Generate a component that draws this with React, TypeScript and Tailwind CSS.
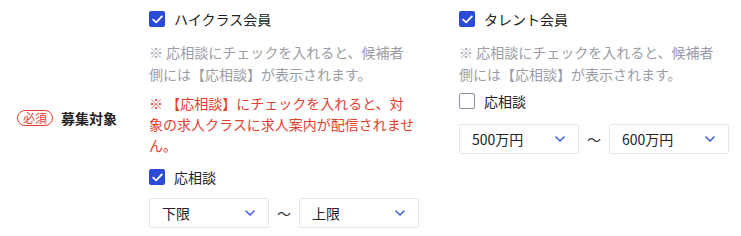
import { useState } from 'react'

const FONT = "font-['Noto_Sans_CJK_JP','Noto_Sans',sans-serif]"

function Check({ checked, label, onChange }: { checked: boolean; label: string; onChange: () => void }) {
  return (
    <button type="button" onClick={onChange} className="flex items-center h-[22px] gap-[9px] text-left">
      {checked ? (
        <span className="w-4 h-4 rounded-[2px] bg-[#2c4ad8] flex items-center justify-center">
          <svg width="11" height="9" viewBox="0 0 11 9" fill="none">
            <path d="M1.2 4.6 L4.1 7.3 L9.8 1.5" stroke="white" strokeWidth="1.8" strokeLinecap="round" strokeLinejoin="round" />
          </svg>
        </span>
      ) : (
        <span className="w-4 h-4 rounded-[2px] border border-[#8d90a0] bg-white" />
      )}
      <span className="text-[14px] text-[#222]">{label}</span>
    </button>
  )
}

function Select({ value }: { value: string }) {
  return (
    <div className="w-[120px] h-[30px] border border-[#e4e6ee] rounded-[2px] flex items-center justify-between pl-[12px] pr-[13px] bg-white">
      <span className="text-[14px] text-[#222]">{value}</span>
      <svg width="10" height="6" viewBox="0 0 10 6" fill="none">
        <path d="M1 1 L5 5 L9 1" stroke="#3b57dd" strokeWidth="1.5" strokeLinecap="round" strokeLinejoin="round" />
      </svg>
    </div>
  )
}

function Range({ from, to }: { from: string; to: string }) {
  return (
    <div className="flex items-center">
      <Select value={from} />
      <span className="w-[30px] text-center text-[14px] text-[#333]">〜</span>
      <Select value={to} />
    </div>
  )
}

const NOTE = '※ 応相談にチェックを入れると、候補者側には【応相談】が表示されます。'

export default function App() {
  const [high, setHigh] = useState(true)
  const [talent, setTalent] = useState(true)
  const [highConsult, setHighConsult] = useState(true)
  const [talentConsult, setTalentConsult] = useState(false)

  return (
    <div className={`${FONT} w-[741px] h-[236px] bg-white flex items-center pl-[17px] [text-spacing-trim:space-all]`}>
      <div className="w-[132px] flex items-center gap-[8px]">
        <span className="h-[16px] px-[5px] rounded-full border border-[#e4402f] text-[#e4402f] text-[12px] leading-[14px] flex items-center">必須</span>
        <span className="text-[14px] font-bold text-[#222]">募集対象</span>
      </div>

      {/* ハイクラス */}
      <div className="w-[270px] self-stretch flex flex-col pt-[8px]">
        <Check checked={high} label="ハイクラス会員" onChange={() => setHigh(!high)} />
        <p className="mt-[11px] w-[267px] text-[14px] leading-[22px] text-[#9a9ca6]">{NOTE}</p>
        <p className="mt-[8px] w-[267px] text-[14px] leading-[21px] text-[#e4402f]">
          ※ 【応相談】にチェックを入れると、対象の求人クラスに求人案内が配信されません。
        </p>
        <div className="mt-[10px]">
          <Check checked={highConsult} label="応相談" onChange={() => setHighConsult(!highConsult)} />
        </div>
        <div className="mt-[10px]">
          <Range from="下限" to="上限" />
        </div>
      </div>

      {/* タレント */}
      <div className="ml-[40px] w-[270px] self-stretch flex flex-col pt-[8px]">
        <Check checked={talent} label="タレント会員" onChange={() => setTalent(!talent)} />
        <p className="mt-[11px] w-[267px] text-[14px] leading-[22px] text-[#9a9ca6]">{NOTE}</p>
        <div className="mt-[5px]">
          <Check checked={talentConsult} label="応相談" onChange={() => setTalentConsult(!talentConsult)} />
        </div>
        <div className="mt-[12px]">
          <Range from="500万円" to="600万円" />
        </div>
      </div>
    </div>
  )
}
